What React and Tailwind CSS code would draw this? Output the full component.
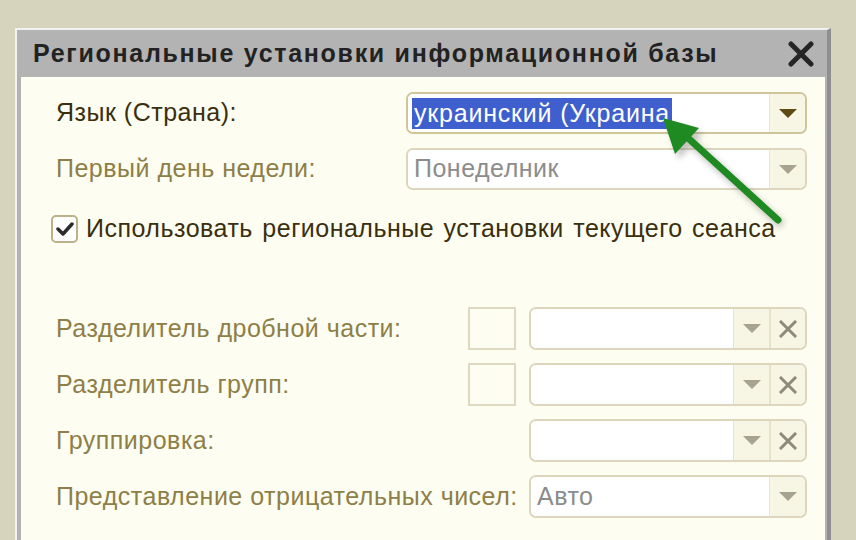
import React from 'react'

const FONT = { fontFamily: '"Liberation Sans", Arial, sans-serif' }

function Tri({ dark }) {
  return (
    <svg width="18" height="9" viewBox="0 0 18 9">
      <polygon points="0,0 18,0 9,9" fill={dark ? '#5e4b14' : '#a8a290'} />
    </svg>
  )
}

function ClearX() {
  return (
    <svg width="18" height="18" viewBox="0 0 18 18">
      <path d="M2 2 L16 16 M16 2 L2 16" stroke="#8e897b" strokeWidth="3" strokeLinecap="square" />
    </svg>
  )
}

function Combo({ width, value, selected, dark, clear, muted }) {
  return (
    <div
      className={`flex h-full rounded-[7px] border-2 overflow-hidden ${dark ? 'border-[#cfc49a]' : 'border-[#ddd6bc]'}`}
      style={{ width }}
    >
      <div className="flex-1 bg-white flex items-center pl-[4px] overflow-hidden">
        {selected ? (
          <span className="bg-[#3f5fcf] text-white text-[25px] tracking-[0.8px] leading-[31px] px-[2px] whitespace-nowrap">{value}</span>
        ) : (
          <span className={`text-[25px] tracking-[0.5px] whitespace-nowrap pl-[2px] ${muted ? 'text-[#8c8c8c]' : 'text-[#777]'}`}>{value}</span>
        )}
      </div>
      <div className="w-[36px] bg-[#f7f6e4] border-l border-[#e9e5cf] flex items-center justify-center">
        <Tri dark={dark} />
      </div>
      {clear && (
        <div className="w-[36px] bg-[#f7f6e4] border-l-2 border-[#e6e2cb] flex items-center justify-center">
          <ClearX />
        </div>
      )}
    </div>
  )
}

function Label({ children, dark }) {
  return (
    <span className={`text-[25px] tracking-[0.5px] whitespace-nowrap ${dark ? 'text-[#3a2f0e]' : 'text-[#8d7f47]'}`}>{children}</span>
  )
}

export default function App() {
  return (
    <div className="relative w-[856px] h-[540px] overflow-hidden bg-[#d6d4bd]" style={FONT}>
      <div className="ml-[15px] mt-[28px] w-[816px] h-[530px] bg-[#b3b3b3] border-t-2 border-l-2 border-[#f2f2f2] border-r-[4px] border-r-[#8f8f8f] flex flex-col">
        {/* title */}
        <div className="h-[47px] flex items-center justify-between pl-[16px] pr-[12px]">
          <span className="text-[25px] font-bold text-[#222] tracking-[1.7px] whitespace-nowrap">
            Региональные установки информационной базы
          </span>
          <svg width="28" height="26" viewBox="0 0 28 26">
            <path d="M4 3 L24 23 M24 3 L4 23" stroke="#252525" strokeWidth="5" strokeLinecap="round" />
          </svg>
        </div>
        {/* body */}
        <div className="flex-1 ml-[4px] mr-[2px] bg-[#fdfdf1] flex flex-col pt-[15px] pr-[18px]">
          <div className="h-[42px] flex items-center">
            <div className="pl-[35px] flex-1"><Label dark>Язык (Страна):</Label></div>
            <Combo width={401} value="украинский (Украина" selected dark />
          </div>
          <div className="h-[42px] mt-[14px] flex items-center">
            <div className="pl-[35px] flex-1"><Label>Первый день недели:</Label></div>
            <Combo width={401} value="Понеделник" muted />
          </div>
          <div className="h-[28px] mt-[25px] flex items-center pl-[30px] gap-[8px]">
            <div className="w-[27px] h-[28px] rounded-[5px] border-2 border-[#bdb187] bg-white flex items-center justify-center">
              <svg width="18" height="16" viewBox="0 0 18 16">
                <path d="M2 8 L7 13 L16 3" fill="none" stroke="#2b2b2b" strokeWidth="3.5" strokeLinecap="round" strokeLinejoin="round" />
              </svg>
            </div>
            <span className="text-[25px] tracking-[0.5px] [word-spacing:2px] whitespace-nowrap text-[#3a2f0e]">
              Использовать региональные установки текущего сеанса
            </span>
          </div>

          <div className="h-[43px] mt-[64px] flex items-center">
            <div className="pl-[35px] flex-1"><Label>Разделитель дробной части:</Label></div>
            <div className="w-[48px] h-full border-2 border-[#e0d9c2] mr-[13px]" />
            <Combo width={278} clear />
          </div>
          <div className="h-[43px] mt-[13px] flex items-center">
            <div className="pl-[35px] flex-1"><Label>Разделитель групп:</Label></div>
            <div className="w-[48px] h-full border-2 border-[#e0d9c2] mr-[13px]" />
            <Combo width={278} clear />
          </div>
          <div className="h-[43px] mt-[13px] flex items-center">
            <div className="pl-[35px] flex-1"><Label>Группировка:</Label></div>
            <Combo width={278} clear />
          </div>
          <div className="h-[43px] mt-[13px] flex items-center">
            <div className="pl-[35px] flex-1"><Label>Представление отрицательных чисел:</Label></div>
            <Combo width={278} value="Авто" muted />
          </div>
        </div>
      </div>

      {/* green pointer arrow */}
      <svg className="absolute inset-0 pointer-events-none" width="856" height="540" viewBox="0 0 856 540">
        <defs>
          <filter id="sh" x="-20%" y="-20%" width="140%" height="140%">
            <feGaussianBlur stdDeviation="3" />
          </filter>
        </defs>
        <g opacity="0.35" filter="url(#sh)" transform="translate(4 5)">
          <line x1="778" y1="220" x2="688" y2="138" stroke="#555" strokeWidth="8" />
          <polygon points="663,118 699,128 675,154" fill="#555" />
        </g>
        <line x1="778" y1="220" x2="688" y2="138" stroke="#1f8a22" strokeWidth="7" strokeLinecap="round" />
        <polygon points="663,118 699,128 675,154" fill="#1f8a22" />
      </svg>
    </div>
  )
}
